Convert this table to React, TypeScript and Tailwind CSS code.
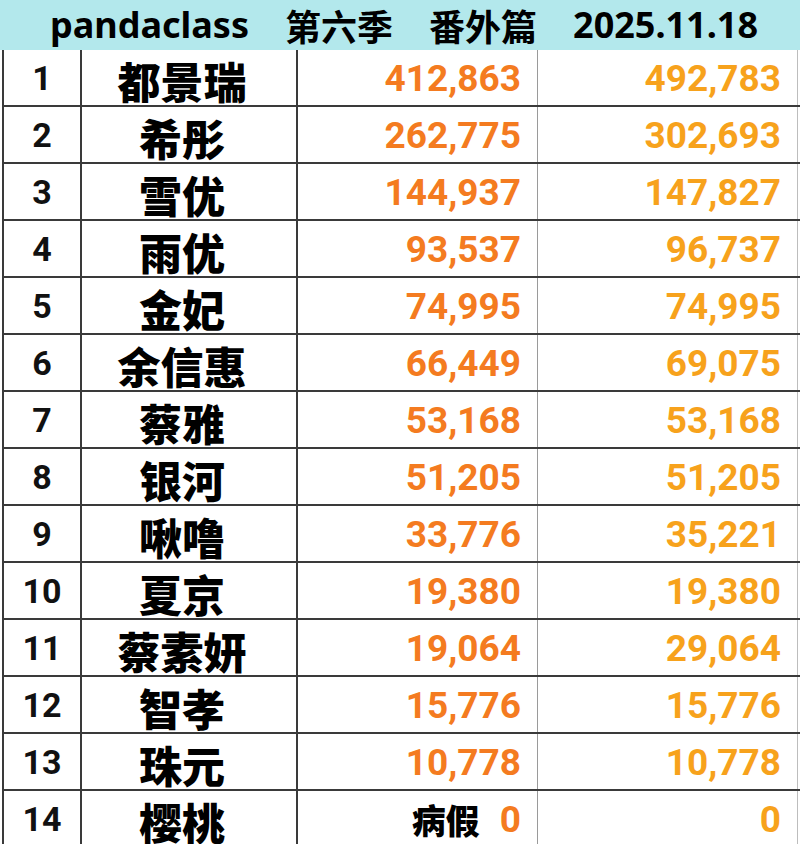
import React from 'react';

type Row = { rank: number; name: string; today: string; total: string; note?: string };

const ROWS: Row[] = [
  { rank: 1, name: '都景瑞', today: '412,863', total: '492,783' },
  { rank: 2, name: '希彤', today: '262,775', total: '302,693' },
  { rank: 3, name: '雪优', today: '144,937', total: '147,827' },
  { rank: 4, name: '雨优', today: '93,537', total: '96,737' },
  { rank: 5, name: '金妃', today: '74,995', total: '74,995' },
  { rank: 6, name: '余信惠', today: '66,449', total: '69,075' },
  { rank: 7, name: '蔡雅', today: '53,168', total: '53,168' },
  { rank: 8, name: '银河', today: '51,205', total: '51,205' },
  { rank: 9, name: '啾噜', today: '33,776', total: '35,221' },
  { rank: 10, name: '夏京', today: '19,380', total: '19,380' },
  { rank: 11, name: '蔡素妍', today: '19,064', total: '29,064' },
  { rank: 12, name: '智孝', today: '15,776', total: '15,776' },
  { rank: 13, name: '珠元', today: '10,778', total: '10,778' },
  { rank: 14, name: '樱桃', today: '0', total: '0', note: '病假' },
];

const cjk = "font-['Noto_Sans_CJK_SC','Noto_Sans',sans-serif]";
const num = "font-['Roboto','Liberation_Sans',sans-serif]";

export default function App() {
  return (
    <div className="w-[800px] h-[844px] overflow-hidden bg-white">
      {/* Title bar */}
      <div
        className={`h-[50px] bg-[#b3e8ec] flex items-center justify-center gap-[36px] pl-[8px] text-[36px] font-bold text-black leading-none ${cjk}`}
      >
        <span className="font-['Noto_Sans','Open_Sans',sans-serif]">pandaclass</span>
        <span>第六季</span>
        <span>番外篇</span>
        <span className="font-['Noto_Sans','Open_Sans',sans-serif]">2025.11.18</span>
      </div>

      {/* Table */}
      <div className="ml-[2px] border-l-2 border-[#3a3a3a]">
        {ROWS.map((r) => (
          <div key={r.rank} className="flex h-[57px] border-b-2 border-[#3a3a3a]">
            <div
              className={`w-[78px] flex items-center justify-center pt-[2px] border-r-2 border-[#3a3a3a] text-[34px] font-bold text-[#111] ${num}`}
            >
              {r.rank}
            </div>
            <div
              className={`w-[216px] flex items-center justify-center pr-[14px] pt-[6px] border-r-2 border-[#3a3a3a] text-[43px] font-black text-black leading-none ${cjk}`}
            >
              {r.name}
            </div>
            <div className="w-[240px] flex items-center justify-end pr-[16px] pt-[2px] border-r border-[#9a9a9a]">
              {r.note && (
                <span className={`mr-[20px] text-[34px] font-black text-black leading-none ${cjk}`}>{r.note}</span>
              )}
              <span className={`text-[37px] font-bold text-[#f47b20] leading-none ${num}`}>{r.today}</span>
            </div>
            <div className="w-[260px] flex items-center justify-end pr-[16px] pt-[2px] border-r border-[#bdbdbd]">
              <span className={`text-[37px] font-bold text-[#f7a21c] leading-none ${num}`}>{r.total}</span>
            </div>
          </div>
        ))}
      </div>
    </div>
  );
}
